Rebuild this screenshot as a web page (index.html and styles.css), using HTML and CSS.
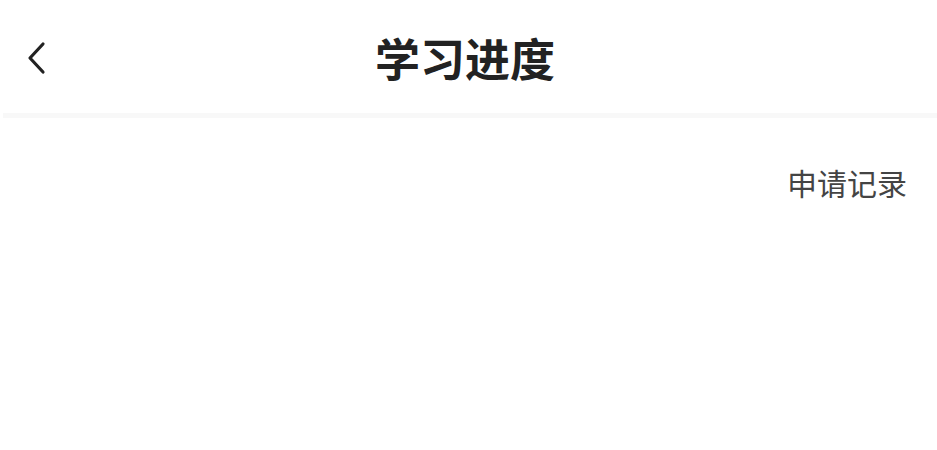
FILE: index.html
```html
<!DOCTYPE html>
<html lang="zh-CN">
<head>
<meta charset="utf-8">
<title>学习进度</title>
<link rel="stylesheet" href="styles.css">
</head>
<body>
<header class="navbar">
  <button class="back" aria-label="返回">
    <svg width="22" height="34" viewBox="0 0 22 34"><path d="M17 3 L4 17 L17 31" fill="none" stroke="#222" stroke-width="3.2" stroke-linecap="round" stroke-linejoin="round"/></svg>
  </button>
  <h1 class="title">学习进度</h1>
</header>
<main class="content">
  <div class="actions"><a class="records">申请记录</a></div>
</main>
</body>
</html>
```

FILE: styles.css
```css
html, body {
  margin: 0;
  padding: 0;
  background: #fff;
  font-family: "Noto Sans CJK SC", "Noto Sans", sans-serif;
}
.navbar {
  position: relative;
  height: 113px;
  display: flex;
  align-items: center;
  justify-content: center;
  border-bottom: 5px solid #f8f8f8;
  margin-left: 3px;
}
.back {
  position: absolute;
  left: 23px;
  top: 41px;
  padding: 0;
  border: 0;
  background: none;
  display: flex;
}
.title {
  margin: 2px 10px 0 0;
  font-size: 45px;
  font-weight: 700;
  color: #222;
  line-height: 1;
}
.content {
  padding: 44px 30px 0 0;
}
.actions {
  display: flex;
  justify-content: flex-end;
}
.records {
  font-size: 30px;
  color: #444;
  line-height: 40px;
}
```
